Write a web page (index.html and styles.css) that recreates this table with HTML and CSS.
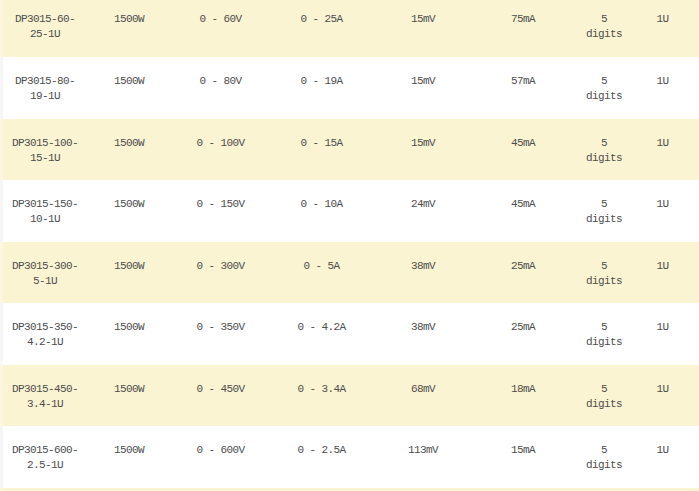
FILE: index.html
```html
<!DOCTYPE html>
<html>
<head>
<meta charset="utf-8">
<link rel="stylesheet" href="styles.css">
</head>
<body>
<div class="spec-table">
  <div class="row alt">
    <div class="cell">DP3015-60-<br>25-1U</div><div class="cell">1500W</div><div class="cell">0 - 60V</div><div class="cell">0 - 25A</div><div class="cell">15mV</div><div class="cell">75mA</div><div class="cell narrow">5 digits</div><div class="cell">1U</div>
  </div>
  <div class="row">
    <div class="cell">DP3015-80-<br>19-1U</div><div class="cell">1500W</div><div class="cell">0 - 80V</div><div class="cell">0 - 19A</div><div class="cell">15mV</div><div class="cell">57mA</div><div class="cell narrow">5 digits</div><div class="cell">1U</div>
  </div>
  <div class="row alt">
    <div class="cell">DP3015-100-<br>15-1U</div><div class="cell">1500W</div><div class="cell">0 - 100V</div><div class="cell">0 - 15A</div><div class="cell">15mV</div><div class="cell">45mA</div><div class="cell narrow">5 digits</div><div class="cell">1U</div>
  </div>
  <div class="row">
    <div class="cell">DP3015-150-<br>10-1U</div><div class="cell">1500W</div><div class="cell">0 - 150V</div><div class="cell">0 - 10A</div><div class="cell">24mV</div><div class="cell">45mA</div><div class="cell narrow">5 digits</div><div class="cell">1U</div>
  </div>
  <div class="row alt">
    <div class="cell">DP3015-300-<br>5-1U</div><div class="cell">1500W</div><div class="cell">0 - 300V</div><div class="cell">0 - 5A</div><div class="cell">38mV</div><div class="cell">25mA</div><div class="cell narrow">5 digits</div><div class="cell">1U</div>
  </div>
  <div class="row">
    <div class="cell">DP3015-350-<br>4.2-1U</div><div class="cell">1500W</div><div class="cell">0 - 350V</div><div class="cell">0 - 4.2A</div><div class="cell">38mV</div><div class="cell">25mA</div><div class="cell narrow">5 digits</div><div class="cell">1U</div>
  </div>
  <div class="row alt">
    <div class="cell">DP3015-450-<br>3.4-1U</div><div class="cell">1500W</div><div class="cell">0 - 450V</div><div class="cell">0 - 3.4A</div><div class="cell">68mV</div><div class="cell">18mA</div><div class="cell narrow">5 digits</div><div class="cell">1U</div>
  </div>
  <div class="row">
    <div class="cell">DP3015-600-<br>2.5-1U</div><div class="cell">1500W</div><div class="cell">0 - 600V</div><div class="cell">0 - 2.5A</div><div class="cell">113mV</div><div class="cell">15mA</div><div class="cell narrow">5 digits</div><div class="cell">1U</div>
  </div>
  <div class="row alt tail"></div>
</div>
</body>
</html>
```

FILE: styles.css
```css
html, body {
  margin: 0;
  padding: 0;
  background: #ffffff;
  overflow: hidden;
}

.spec-table {
  margin-top: -4.57px;
  font-family: "Liberation Mono", "DejaVu Sans Mono", monospace;
  font-size: 11px;
  letter-spacing: -0.6px;
  line-height: 15px;
  color: #4d4d4d;
}

.row {
  display: grid;
  grid-template-columns: 84px 84px 99px 103px 100px 100px 62px 55px;
  height: 61.57px;
  border-left: 3px solid #f6f6f6;
  background: #ffffff;
  box-sizing: border-box;
}

.row.alt {
  background: #fbf4d2;
  border-left-color: #fcf7de;
}

.row.tail {
  height: 3.5px;
}

.cell {
  padding-top: 17px;
  text-align: center;
  white-space: normal;
}

.cell.narrow {
  padding-left: 8px;
  padding-right: 8px;
}
```
